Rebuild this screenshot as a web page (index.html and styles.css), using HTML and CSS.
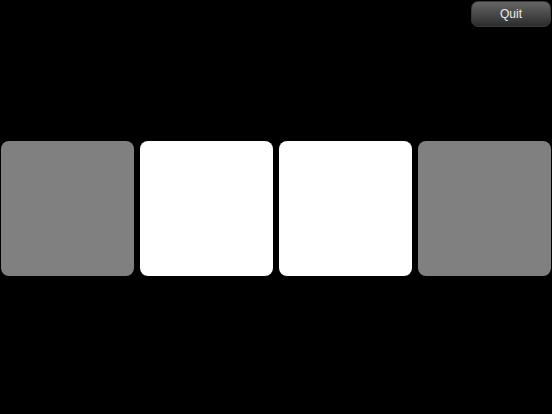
FILE: index.html
```html
<!DOCTYPE html>
<html>
<head>
<meta charset="utf-8">
<link rel="stylesheet" href="styles.css">
</head>
<body>
<div class="page">
  <div class="topbar">
    <button class="quit">Quit</button>
  </div>
  <div class="cards">
    <div class="card grey"></div>
    <div class="card white"></div>
    <div class="card white"></div>
    <div class="card grey"></div>
  </div>
</div>
</body>
</html>
```
FILE: styles.css
```css
html, body {
  margin: 0;
  padding: 0;
  background: #000;
  width: 552px;
  height: 414px;
  overflow: hidden;
}
.page {
  display: flex;
  flex-direction: column;
  width: 552px;
  height: 414px;
}
.topbar {
  display: flex;
  justify-content: flex-end;
  padding: 1px 1px 0 0;
}
.quit {
  width: 80px;
  height: 26px;
  border: 1px solid #3a3a3a;
  border-radius: 7px;
  background: linear-gradient(to bottom, #666 0%, #4c4c4c 45%, #2c2c2c 100%);
  color: #eeeeee;
  font-family: "Liberation Sans", Arial, sans-serif;
  font-size: 12px;
  padding: 0;
  line-height: 24px;
}
.cards {
  display: flex;
  gap: 6px;
  padding-left: 1px;
  margin-top: 114px;
}
.card {
  width: 133px;
  height: 135px;
  border-radius: 8px;
}
.grey { background: #808080; }
.white { background: #ffffff; }
```
